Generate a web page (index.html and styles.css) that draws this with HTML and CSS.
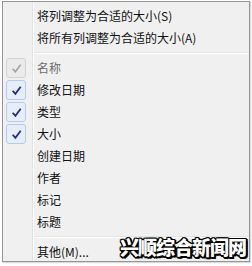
FILE: index.html
```html
<!DOCTYPE html>
<html>
<head>
<meta charset="utf-8">
<link rel="stylesheet" href="styles.css">
</head>
<body>
<div class="menu">
  <div class="gutter-line"></div>
  <div class="item"><span class="check"></span><span class="label">将列调整为合适的大小(S)</span></div>
  <div class="item"><span class="check"></span><span class="label">将所有列调整为合适的大小(A)</span></div>
  <div class="sep"></div>
  <div class="item disabled"><span class="check on grey"><svg viewBox="0 0 10 10" width="11" height="11"><path d="M1.5 5.2 L4 8 L8.8 1.5" fill="none" stroke="#a0a0a0" stroke-width="1.4"/></svg></span><span class="label">名称</span></div>
  <div class="item"><span class="check on"><svg viewBox="0 0 10 10" width="11" height="11"><path d="M1.5 5.2 L4 8 L8.8 1.5" fill="none" stroke="#1c2a9c" stroke-width="1.6"/></svg></span><span class="label">修改日期</span></div>
  <div class="item"><span class="check on"><svg viewBox="0 0 10 10" width="11" height="11"><path d="M1.5 5.2 L4 8 L8.8 1.5" fill="none" stroke="#1c2a9c" stroke-width="1.6"/></svg></span><span class="label">类型</span></div>
  <div class="item"><span class="check on"><svg viewBox="0 0 10 10" width="11" height="11"><path d="M1.5 5.2 L4 8 L8.8 1.5" fill="none" stroke="#1c2a9c" stroke-width="1.6"/></svg></span><span class="label">大小</span></div>
  <div class="item"><span class="check"></span><span class="label">创建日期</span></div>
  <div class="item"><span class="check"></span><span class="label">作者</span></div>
  <div class="item"><span class="check"></span><span class="label">标记</span></div>
  <div class="item"><span class="check"></span><span class="label">标题</span></div>
  <div class="sep"></div>
  <div class="item"><span class="check"></span><span class="label">其他(M)...</span></div>
</div>
<div class="watermark">兴顺综合新闻网</div>
</body>
</html>
```
FILE: styles.css
```css
html, body {
  margin: 0;
  padding: 0;
}
body {
  width: 252px;
  height: 266px;
  background: #ffffff;
  position: relative;
  overflow: hidden;
  font-family: "Noto Sans CJK SC", "Noto Sans", sans-serif;
  font-size: 12px;
}
.menu {
  position: relative;
  margin: 1px 0 0 2px;
  width: 248px;
  height: 261px;
  border: 1px solid #979797;
  background: #f0f0f0;
  padding-top: 3px;
  box-sizing: border-box;
  box-shadow: 1px 1px 1px rgba(0,0,0,0.15);
}
.gutter-line {
  position: absolute;
  left: 29px;
  top: 0;
  bottom: 0;
  width: 1px;
  background: #e2e3e3;
  border-right: 1px solid #ffffff;
}
.item {
  height: 22px;
  display: flex;
  align-items: center;
  color: #111;
}
.item.disabled {
  color: #6d6d6d;
}
.check {
  width: 20px;
  height: 20px;
  margin-left: 3px;
  box-sizing: border-box;
  display: flex;
  align-items: center;
  justify-content: center;
  flex: none;
}
.check.on {
  border: 1px solid #b0cdef;
  border-radius: 3px;
  background: #e6eefa;
}
.check.on.grey {
  border-color: #d2d2d2;
  background: #ebebeb;
}
.label {
  margin-left: 11px;
  line-height: 22px;
  white-space: nowrap;
}
.sep {
  height: 8px;
  margin-left: 31px;
  display: flex;
  align-items: center;
}
.sep::before {
  content: "";
  display: block;
  width: 100%;
  height: 1px;
  background: #e2e3e3;
  border-bottom: 1px solid #ffffff;
}
.watermark {
  position: absolute;
  left: 120px;
  top: 233px;
  font-family: "Noto Sans CJK SC", sans-serif;
  font-weight: 900;
  font-size: 19px;
  letter-spacing: -1px;
  color: #ffffff;
  text-shadow: 1px 0 0 #000, -1px 0 0 #000, 0 1px 0 #000, 0 -1px 0 #000, 1px 1px 0 #000, -1px -1px 0 #000, 1px -1px 0 #000, -1px 1px 0 #000, 2px 0 0 #000, 0 2px 0 #000, 2px 2px 0 #000;
}
```
